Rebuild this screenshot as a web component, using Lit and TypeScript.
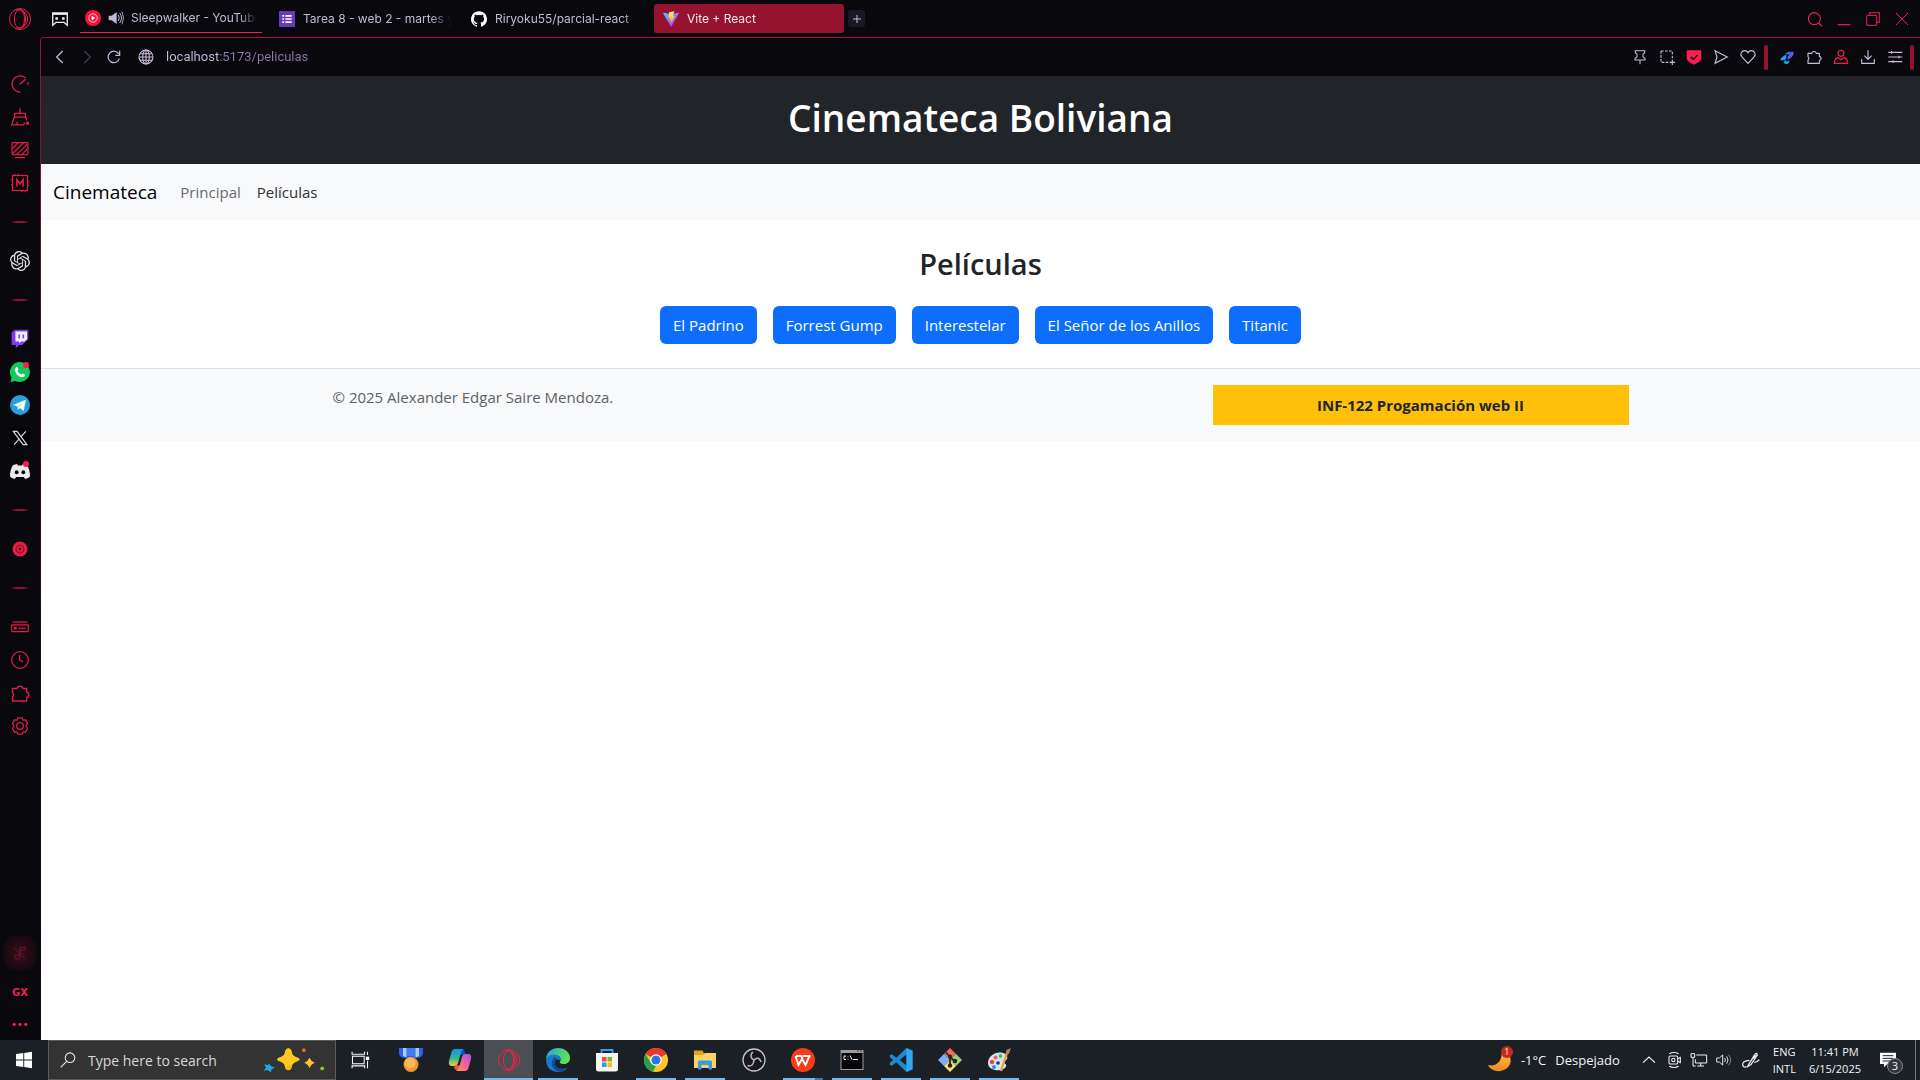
import { LitElement, html, svg, css, type SVGTemplateResult } from "lit";
import { customElement, property } from "lit/decorators.js";
import { classMap } from "lit/directives/class-map.js";

const icons: Record<string, SVGTemplateResult> = {
  operaGx: svg`<g fill="none" stroke="#f0204b" stroke-width="1"><circle cx="12" cy="12" r="10.5"/><ellipse cx="12" cy="12" rx="5.600" ry="9.400"/><path d="M8 3.200C14.500 1.500 19.500 6 19.500 12S14.500 22.500 8 20.800"/><path d="M13.500 3C17.500 8 17.500 16 13.500 21"/></g>`,
  gaming: svg`<path d="M3.300 6h17.400v13.500l-4-3.500H7.300l-4 3.500z" fill="none" stroke="#f1eef5" stroke-width="1.600"/><path d="M2.500 4h19v2.500h-19zM6.500 10h3v3h-3zM14.500 10h3v3h-3z" fill="#f1eef5"/>`,
  ytMusic: svg`<circle cx="12" cy="12" r="12" fill="#ff1039"/><circle cx="12" cy="12" r="6.300" fill="none" stroke="#fff" stroke-width="1.200"/><path d="M10 8.500v7l5.600-3.500z" fill="#fff"/>`,
  sound: svg`<path d="M1 8.500h4.500L13 3v18l-7.500-5.500H1z" fill="#c3b6d6"/><path d="M15.500 7.500q3 4.500 0 9M17.500 4.500q5.500 7.500 0 15" fill="none" stroke="#c3b6d6" stroke-width="1.500"/><path d="M21 2.500q4.500 9.500 0 19" fill="none" stroke="#c3b6d6" stroke-width="1.300"/>`,
  forms: svg`<rect width="24" height="24" rx="1" fill="#673ab7"/><path d="M5 6h2.600v2.600H5zM5 10.700h2.600v2.600H5zM5 15.400h2.600V18H5zM9.500 6H19v2.600H9.500zM9.500 10.700H19v2.600H9.500zM9.500 15.400H19V18H9.500z" fill="#fff"/>`,
  github: svg`<path fill="#fff" d="M12 .3a12 12 0 0 0-3.800 23.400c.6.100.800-.3.800-.6v-2c-3.300.700-4-1.600-4-1.600-.6-1.400-1.400-1.800-1.400-1.800-1-.7.100-.7.100-.7 1.200 0 1.900 1.200 1.900 1.200 1 1.800 2.800 1.300 3.500 1 0-.8.400-1.300.7-1.600-2.700-.3-5.500-1.300-5.500-6 0-1.200.5-2.300 1.300-3.100-.2-.4-.6-1.600 0-3.200 0 0 1-.3 3.400 1.200a11.500 11.500 0 0 1 6 0c2.300-1.500 3.300-1.200 3.300-1.200.6 1.600.2 2.800 0 3.200.9.800 1.300 1.900 1.300 3.200 0 4.600-2.800 5.600-5.500 5.900.5.400.9 1 .9 2.200v3.300c0 .3.100.7.800.6A12 12 0 0 0 12 .3"/>`,
  vite: svg`<defs><linearGradient id="va" x1="0" y1="0" x2=".6" y2="1"><stop stop-color="#41d1ff"/><stop offset="1" stop-color="#bd34fe"/></linearGradient><linearGradient id="vb" x1="0" y1="0" x2="0" y2="1"><stop stop-color="#ffea83"/><stop offset="1" stop-color="#ffa800"/></linearGradient></defs><path d="M23.700 3.700 12.600 23.300a.6.600 0 0 1-1 0L.3 3.700a.6.600 0 0 1 .6-.9L12 4.800l11.100-2a.6.600 0 0 1 .6.900z" fill="url(#va)"/><path d="m17 .2-8 1.600-.6 9.300 2.700-.6-.8 4 2.400-.8-1.200 5 .5.100 5.600-11.300-2.800.5z" fill="url(#vb)"/>`,
  plus: svg`<path d="M12 4v16M4 12h16" stroke="#c8bcda" stroke-width="2"/>`,
  search: svg`<g fill="none" stroke="#f0204b" stroke-width="1.700"><circle cx="11" cy="11.500" r="9"/><path d="m17.500 18 5 5"/></g>`,
  minimize: svg`<path d="M2.500 20.500h19" stroke="#f0204b" stroke-width="1.800"/>`,
  restore: svg`<g fill="none" stroke="#c51e43" stroke-width="1.800"><rect x="2.500" y="6.500" width="15" height="15" rx="1.500"/><path d="M7 6V2.500h14.500V17H18"/></g>`,
  close: svg`<path d="m3 3 18 18M21 3 3 21" stroke="#f0204b" stroke-width="1.500"/>`,
  back: svg`<path d="m16 3-9 9 9 9" fill="none" stroke="#c8bcda" stroke-width="1.900"/>`,
  forward: svg`<path d="m8 3 9 9-9 9" fill="none" stroke="#413b4c" stroke-width="1.900"/>`,
  reload: svg`<path d="M20 14.500A8.600 8.600 0 1 1 19 7.200M20.500 2.500v7H14" fill="none" stroke="#c8bcda" stroke-width="1.800"/>`,
  globe: svg`<g fill="none" stroke="#c8bcda" stroke-width="1.600"><circle cx="12" cy="12" r="10.500"/><ellipse cx="12" cy="12" rx="5" ry="10.500"/><path d="M12 1.500v21M1.500 12h21M3 7h18M3 17h18"/></g>`,
  pin: svg`<path d="M5 2.500h14v3l-2.500 2v4l3 3v2h-15v-2l3-3v-4L5 5.500zM12 17v6" fill="none" stroke="#c8bcda" stroke-width="1.600"/>`,
  snapshot: svg`<path d="M3 3h17v11" fill="none" stroke="#c8bcda" stroke-width="1.700" stroke-dasharray="4 2"/><path d="M3 3v17h11" fill="none" stroke="#c8bcda" stroke-width="1.700" stroke-dasharray="4 2"/><path d="M20 16v8M16 20h8" stroke="#c8bcda" stroke-width="1.700"/>`,
  shield: svg`<path d="M1 3.500Q1 2 2.500 2h19Q23 2 23 3.500V14q0 5-11 9.500Q1 19 1 14z" fill="#fa1e4e"/><path d="m7 12 4 3.500L17.500 9" fill="none" stroke="#12040a" stroke-width="1.900"/>`,
  send: svg`<path d="m3 2.500 18.500 9.500L3 21.500 6 12z" fill="none" stroke="#c8bcda" stroke-width="1.700"/>`,
  heart: svg`<path d="M12 21.500 2.500 11.500C-.5 7 3 2.500 7 2.500q3.500 0 5 3 1.500-3 5-3c4 0 7.500 4.500 4.500 9z" fill="none" stroke="#c8bcda" stroke-width="1.700"/>`,
  bird: svg`<path d="M9 7.500 14 4h8q0 7-5 9.500L13.500 16l-1-4 3-3.500z" fill="#4f5df0"/><path d="M11 8 3 13.500l-1 3.500h6l3-3zM9 16.500l3 2.500 4-2.500q0 3-3 6-4 .5-6-2z" fill="#18a5f5"/>`,
  puzzle: svg`<path d="M3 6.500h5.500a3.600 3.600 0 0 1 7 0H20v4.500a3.200 3.200 0 0 1 0 6.300v4.200H3v-5a3 3 0 0 0 0-5z" fill="none" stroke="currentColor" stroke-width="1.700" stroke-linejoin="round"/>`,
  person: svg`<g fill="none" stroke="#ec1f4a" stroke-width="1.800"><circle cx="12" cy="6.500" r="4.500"/><path d="M8 13c-4 .5-6 3-6 8.500h20c0-5.500-2-8-6-8.500l-4 3z"/></g>`,
  download: svg`<path d="M12 2v13M6.500 10l5.500 5.500 5.500-5.500M2.500 15v6.500h19V15" fill="none" stroke="#c8bcda" stroke-width="1.700"/>`,
  sliders: svg`<path d="M2 5h21M2 12h21M2 19h21M7 3v4M18 10v4M9 17v4" stroke="#c8bcda" stroke-width="1.700"/>`,

  gauge: svg`<path d="M12.500 21.700A9.700 9.700 0 1 1 19 5M11.500 12.500 19 6M21.700 9.500v4" fill="none" stroke="currentColor" stroke-width="1.500"/>`,
  broom: svg`<path d="M12 1.500v6M5.500 12V7.500h13V12zM5 12 2 21.500h14.500l1-3M8 21.500l1-4M19 12l1 4" fill="none" stroke="currentColor" stroke-width="1.500"/><circle cx="21" cy="19.500" r="2" fill="currentColor"/>`,
  monitor: svg`<rect x="2.500" y="3" width="19" height="14.500" rx="1" fill="none" stroke="currentColor" stroke-width="1.500"/><path d="m3 10 7-7M3 16.500 16.500 3M8 17.500 21 5M14 17.500l7-7M6 21h12" stroke="currentColor" stroke-width="1.500"/>`,
  mod: svg`<rect x="3" y="3" width="18" height="18" fill="none" stroke="currentColor" stroke-width="1.500"/><path d="M6 3V1M10 3V1M18 21v2M14 21v2M1 8h2M21 10h2M21 15h2M1 14h2" stroke="currentColor" stroke-width="1.300"/><path d="M8.300 16.500V8l3.700 5 3.700-5v8.500" fill="none" stroke="currentColor" stroke-width="1.900"/>`,
  openai: svg`<path fill="#e3e1e6" d="M22.2819 9.8211a5.9847 5.9847 0 0 0-.5157-4.9108 6.0462 6.0462 0 0 0-6.5098-2.9A6.0651 6.0651 0 0 0 4.9807 4.1818a5.9847 5.9847 0 0 0-3.9977 2.9 6.0462 6.0462 0 0 0 .7427 7.0966 5.98 5.98 0 0 0 .511 4.9107 6.051 6.051 0 0 0 6.5146 2.9001A5.9847 5.9847 0 0 0 13.2599 24a6.0557 6.0557 0 0 0 5.7718-4.2058 5.9894 5.9894 0 0 0 3.9977-2.9001 6.0557 6.0557 0 0 0-.7475-7.0729zm-9.022 12.6081a4.4755 4.4755 0 0 1-2.8764-1.0408l.1419-.0804 4.7783-2.7582a.7948.7948 0 0 0 .3927-.6813v-6.7369l2.02 1.1686a.071.071 0 0 1 .038.052v5.5826a4.504 4.504 0 0 1-4.4945 4.4944zm-9.6607-4.1254a4.4708 4.4708 0 0 1-.5346-3.0137l.142.0852 4.783 2.7582a.7712.7712 0 0 0 .7806 0l5.8428-3.3685v2.3324a.0804.0804 0 0 1-.0332.0615L9.74 19.9502a4.4992 4.4992 0 0 1-6.1408-1.6464zM2.3408 7.8956a4.485 4.485 0 0 1 2.3655-1.9728V11.6a.7664.7664 0 0 0 .3879.6765l5.8144 3.3543-2.0201 1.1685a.0757.0757 0 0 1-.071 0l-4.8303-2.7865A4.504 4.504 0 0 1 2.3408 7.872zm16.5963 3.8558L13.1038 8.364 15.1192 7.2a.0757.0757 0 0 1 .071 0l4.8303 2.7913a4.4944 4.4944 0 0 1-.6765 8.1042v-5.6772a.79.79 0 0 0-.407-.667zm2.0107-3.0231l-.142-.0852-4.7735-2.7818a.7759.7759 0 0 0-.7854 0L9.409 9.2297V6.8974a.0662.0662 0 0 1 .0284-.0615l4.8303-2.7866a4.4992 4.4992 0 0 1 6.6802 4.66zM8.3065 12.863l-2.02-1.1638a.0804.0804 0 0 1-.038-.0567V6.0742a4.4992 4.4992 0 0 1 7.3757-3.4537l-.142.0805L8.704 5.459a.7948.7948 0 0 0-.3927.6813zm1.0976-2.3654l2.602-1.4998 2.6069 1.4998v2.9994l-2.5974 1.4997-2.6067-1.4997Z"/>`,
  twitch: svg`<path d="M5.500 1 2 4.500v14.700h5V23l4-3.800h3.500l7.500-7V1z" fill="#7c3df0"/><path d="M6.500 3h14v9l-3 3h-4l-2.500 2.500V15H6.500z" fill="#f3eeff"/><path d="M11 6.500v5M16 6.500v5" stroke="#7c3df0" stroke-width="1.800"/>`,
  whatsapp: svg`<path d="M12 0a12 12 0 0 1 0 24 12 12 0 0 1-5.500-1.300L.5 24l1.400-5.500A12 12 0 0 1 12 0z" fill="#12c95c"/><path d="M7 6.500c1-1 2-.5 2.300.4l.8 2c0 .8-1 1.200-1 1.800 1 2 2.300 3.200 4.300 4.200.7 0 1-1.200 1.800-1.200l2.200 1c1 .6.600 1.800-.3 2.600C12 21 3 11.500 7 6.500z" fill="#fff"/>`,
  telegram: svg`<circle cx="12" cy="12" r="12" fill="#279fdb"/><path d="m3.500 12 15.600-6.200-2.700 13.300-4.600-3.400-2.400 2.300-.3-4.200z" fill="#f4fafd"/><path d="m9.200 13.800 7.600-6-6 6.700-1.300 3.400z" fill="#bddced"/>`,
  x: svg`<rect width="24" height="24" rx="2" fill="#000"/><path d="M4 4h4.500l11.700 16h-4.500zM19 4l-6.200 7M5 20l6.400-7.200" fill="none" stroke="#d9d5df" stroke-width="1.500"/>`,
  discord: svg`<path d="M8.500 3.500C5 4 3.500 5.200 3.500 5.200 1 9 0 13.500 0 18.500c2.500 2.500 6 2.800 6 2.800l1.400-2h9.200l1.400 2s3.500-.3 6-2.800c0-5-1-9.500-3.500-13.300 0 0-1.500-1.200-5-1.700l-1 2h-5z" fill="#ebe9ee"/><ellipse cx="8" cy="13.500" rx="2.300" ry="2.500" fill="#09080d"/><ellipse cx="16" cy="13.500" rx="2.300" ry="2.500" fill="#09080d"/>`,
  player: svg`<circle cx="12" cy="12" r="9" fill="#e81c47"/><circle cx="12" cy="12" r="4.800" fill="none" stroke="#6c1027" stroke-width="1"/><path d="m10.500 9.500 4 2.500-4 2.500z" fill="#4a0b1b"/>`,
  panel: svg`<path d="M3 6h18" stroke="currentColor" stroke-width="1.500"/><rect x="2" y="9.500" width="20" height="8" rx="1" fill="none" stroke="currentColor" stroke-width="1.500"/><path d="M4.500 12H8v3H4.500z" fill="currentColor"/><path d="M10 13.500h9" stroke="currentColor" stroke-width="1.500"/>`,
  clock: svg`<circle cx="12" cy="12" r="10" fill="none" stroke="currentColor" stroke-width="1.500"/><path d="M11.500 6v6.500l4 1.500" fill="none" stroke="currentColor" stroke-width="1.500"/>`,
  gear: svg`<path d="M9.500 2.200h5l1.200 2.700 2.900-.3 2.500 4.300L19.400 12l1.700 3.100-2.500 4.300-2.900-.3-1.200 2.700h-5l-1.200-2.700-2.900.3-2.500-4.300L4.600 12 2.900 8.900l2.500-4.300 2.900.3z" fill="none" stroke="currentColor" stroke-width="1.500" stroke-linejoin="round"/><circle cx="12" cy="12" r="4" fill="none" stroke="currentColor" stroke-width="1.500"/>`,
  muted: svg`<path d="M12 19V3.500h8v4h-8M12 15H4.500v6H12M4 5l16 16" fill="none" stroke="#701329" stroke-width="1.500"/>`,
  dots: svg`<g fill="#f0204b"><circle cx="5" cy="12.500" r="1.900"/><circle cx="12" cy="12.500" r="1.900"/><circle cx="19" cy="12.500" r="1.900"/></g>`,

  windows: svg`<path d="M4 6.100 11.300 5v6.500H4zM12.200 4.900 20 3.700v7.800h-7.800zM4 12.400h7.300V19L4 17.900zM12.200 12.400H20v7.900l-7.800-1.200z" fill="#fff"/>`,
  find: svg`<g fill="none" stroke="#e8e8e8" stroke-width="1.600"><circle cx="15" cy="8.500" r="7.200"/><path d="M10 14 1 23"/></g>`,
  sparkles: svg`<g transform="translate(1 0)"><path d="M31 1q3.500 0 4.200 6 1 2.500 6.300 4 3 1.500 0 3.500-5.300 1.500-6.300 4-.7 6-4.200 6t-4.200-6q-1-2.500-6.300-4-3-2 0-3.500 5.300-1.500 6.300-4Q27.500 1 31 1z" fill="#fdc81f"/><path d="M42 13q-5.500 2-6.800 5.500-.7 6-4.200 6-2.500-1-3-4 9-2 14-7.500z" fill="#f5ad1b" opacity=".6"/><path d="M53.500 11q1.500 3.500 5.500 5.500-4 1.500-5.500 5.500-1.500-4-5.500-5.500 4-2 5.500-5.500z" fill="#fbc12c"/><path d="m10 17 3 3.500 3.500 1-3.500 2-.5 3-3.500-2-4 .5 2-3.500-1.500-3.500 4 1z" fill="#1fa7e8"/><circle cx="47.500" cy="3" r="2" fill="#f06424"/><circle cx="67" cy="22.500" r="2" fill="#8cc63e"/></g>`,
  taskView: svg`<g fill="none" stroke="#f4f4f4" stroke-width="1.300"><rect x="3" y="7.500" width="14" height="9"/><path d="M2.500 2v3h15V2M2.500 22v-3h15v3M21 2v4M21 13v9"/></g><path d="M19 8h4v4h-4z" fill="#fff"/>`,
  medal: svg`<path d="M0 0h24v5q0 5-7 5H7Q0 10 0 5z" fill="#2f62e8"/><path d="M4 0h3.500v9.500L4 8zM16.500 0H20v8l-3.500 1.500z" fill="#a9d0fb"/><path d="M8 0h8v8H8z" fill="#3f7cf3"/><circle cx="12" cy="16.500" r="7.500" fill="#f0943c"/><circle cx="11" cy="15" r="5.500" fill="#fdb74b"/>`,
  copilot: svg`<defs><linearGradient id="ca" x1="0" y1="0" x2="0" y2="1"><stop stop-color="#1b8ff0"/><stop offset=".55" stop-color="#30b98c"/><stop offset="1" stop-color="#f5cf2d"/></linearGradient><linearGradient id="cb" x1="1" y1="0" x2="0" y2="1"><stop stop-color="#a553ee"/><stop offset=".5" stop-color="#f2619b"/><stop offset="1" stop-color="#fb9a48"/></linearGradient></defs><path d="M10 2h6l2 5h-6z" fill="#0c4ed3"/><path d="M7 1h9q-2.500 1-3.500 5L10 15q-1 3-4 3H4q-4 0-3-5L3.500 4Q4.500 1 7 1z" fill="url(#ca)"/><path d="m8 17 5 .5L11 23q-4 0-5-4z" fill="#f05a3a"/><path d="M17 23H8q2.500-1 3.500-5L14 9q1-3 4-3h2q4 0 3 5l-2.500 9q-1 3-3.500 3z" fill="url(#cb)"/>`,
  edge: svg`<defs><linearGradient id="ea" x1="0" y1="0" x2="1" y2=".3"><stop stop-color="#25a5df"/><stop offset="1" stop-color="#62e04f"/></linearGradient></defs><path d="M0 12C0 4 6 0 12 0c7 0 12 4.500 12 10 0 4-3 6-6.500 6-3 0-4.500-1.200-3.500-2.500 1.500-2 .5-6-4-6S1 9.500 0 12z" fill="url(#ea)"/><path d="M0 12q1-5 8-5.500c5 0 7 3.500 6.200 6.500-2-3-6.200-1-6.200 3 0 5 6 8 13 4-2 3-5.500 4-9 4C5 24 0 19 0 12z" fill="#1b78ca"/><path d="M9 9c-6 4-3 14 5 14.800 3-.3 6-2 7.500-4.300-6 2.500-13 .5-12.500-5 .2-2 1.500-3 2.500-3z" fill="#0c4f96"/>`,
  store: svg`<path d="M6.500 6V2h11v4" fill="none" stroke="#2aa5ea" stroke-width="1.800"/><path d="M1 5h22v16q0 2.500-2.500 2.500h-17Q1 23.500 1 21z" fill="#f4f4f4"/><path d="M7 9h4.500v4.500H7z" fill="#f0502a"/><path d="M12.500 9H17v4.500h-4.500z" fill="#7fba1a"/><path d="M7 14.500h4.500V19H7z" fill="#20a2ea"/><path d="M12.500 14.500H17V19h-4.500z" fill="#fdb913"/>`,
  chrome: svg`<circle cx="12" cy="12" r="12" fill="#fdc724"/><path d="M12 12 1.600 6A12 12 0 0 1 22.400 6z" fill="#e8372b"/><path d="M12 0a12 12 0 0 1 10.400 6H12z" fill="#e8372b"/><path d="M1.600 6 7 15l5 3-3 5.600A12 12 0 0 1 1.600 6z" fill="#22a24c"/><circle cx="12" cy="12" r="5.800" fill="#fff"/><circle cx="12" cy="12" r="4.500" fill="#2a74ea"/>`,
  explorer: svg`<path d="M1 2.500h8.500l1.500 3H23V20H1z" fill="#dfa31c"/><path d="M1 7h9l2-2h11v15H1z" fill="#fbd465"/><path d="M5 21.500V14q0-1.500 1.500-1.500h11q1.500 0 1.500 1.500v7.500h-3.500V17h-7v4.500z" fill="#3f9be0"/>`,
  obs: svg`<circle cx="12" cy="12" r="11" fill="#18171b" stroke="#c7c7ca" stroke-width="1.300"/><g fill="none" stroke="#b5b5ba" stroke-width="1.600"><path d="M11 4c-3 2-3 6 1 8"/><path d="M19 14c-1-4-4-5-7-2"/><path d="M5.500 17.500c4 1.500 6-1 6.500-5.500"/></g>`,
  wps: svg`<circle cx="12" cy="12" r="12" fill="#fb3b17"/><path d="m4.500 8 3 9 3.500-6 3.500 6 4-9M5 8h5.500l1 3M12 8h7.500" fill="none" stroke="#fff" stroke-width="1.900"/>`,
  terminal: svg`<path d="M.5 2h23v20H.5z" fill="#9b9da2"/><path d="M1.500 5h21v16h-21z" fill="#050505"/><path d="M17 3h1.500M20 3h1.500" stroke="#333" stroke-width="1"/><path d="M6 8H4v3.500h2M8 8.500v.8M8 10.700v.8M10 7.500l2 4M13 11.500h5" stroke="#eee" stroke-width="1" fill="none"/>`,
  vscode: svg`<path d="m17.500 0 6 2.800v18.400l-6 2.800L7.300 14.200l-4.600 3.600L.8 16.700V15l3.200-3-3.200-3V7.300l1.900-1.100 4.600 3.600zM17.500 6.500 10.500 12l7 5.500z" fill="#1f8ad2"/><path d="m17.500 0 6 2.800v18.400l-6 2.800z" fill="#31a8f0"/>`,
  git: svg`<g><path d="m12 0 6 6-6 6-6-6z" fill="#f06a66"/><path d="m6 6 6 6-6 6-6-6z" fill="#7db0f5"/><path d="m18 6 6 6-6 6-6-6z" fill="#96d671"/><path d="m12 12 6 6-6 6-6-6z" fill="#fbe07b"/></g><path d="M8 4.500 12 9v8M12 9l4.500 4" stroke="#2a2320" stroke-width="1.700" fill="none"/><g fill="#2a2320"><circle cx="12" cy="8.500" r="2"/><circle cx="12" cy="17.500" r="2.200"/><circle cx="17" cy="13" r="2.200"/></g>`,
  paint: svg`<path d="M1 15C1 8 9 3 16 5c4 1 5 4 4 6-1 1.500-3 1.500-3 3s3 2 2 4.500C17 24 1 24 1 15z" fill="#cfe6f5"/><circle cx="5" cy="14" r="2.200" fill="#e44a3c"/><circle cx="8.500" cy="9.500" r="2" fill="#f0615a"/><circle cx="13.500" cy="8" r="1.900" fill="#62b64a"/><circle cx="7" cy="19" r="2" fill="#4a83dd"/><circle cx="11" cy="15" r="1.800" fill="#28394a"/><path d="m20 5-6 18" stroke="#eea02f" stroke-width="2.200"/><path d="m18.500 6 1-4 4.500-2-2 5.500-2 1.500z" fill="#b8824f"/>`,
  moon: svg`<defs><linearGradient id="ma" x1="0" y1="0" x2="0" y2="1"><stop stop-color="#fcc24c"/><stop offset="1" stop-color="#f2861c"/></linearGradient></defs><path d="M14 3c8 2 11 9 7 15-5 7-17 7-21-1 8 2 14-3 14-14z" fill="url(#ma)"/>`,
  chevron: svg`<path d="m3 16 9-8.500 9 8.500" fill="none" stroke="#f0f0f0" stroke-width="1.800"/>`,
  meet: svg`<g fill="none" stroke="#f0f0f0" stroke-width="1.600"><rect x="4.500" y="6" width="13" height="12" rx="2"/><circle cx="11" cy="12" r="2.500"/><path d="m17.500 10 4-2v8l-4-2M5 2.500q7-3.500 14 0M5 21.500q7 3.500 14 0"/></g>`,
  network: svg`<g fill="none" stroke="#f0f0f0" stroke-width="1.500"><path d="M8 4.500h15.500v12H6.500V11M14.500 16.500V21M9.500 21h10"/><path d="M0 2.500h5.500v5.500H0zM3 8v13h4"/></g>`,
  volume: svg`<path d="M1 9h4l5-4.500v15L5 15H1z" fill="none" stroke="#f0f0f0" stroke-width="1.400"/><path d="M13 9q2 3 0 6M16 6.500q4 5.500 0 11" fill="none" stroke="#f0f0f0" stroke-width="1.400"/><path d="M19 4q6 8 0 16" fill="none" stroke="#85888b" stroke-width="1.400"/>`,
  pen: svg`<path d="m8.500 18.500 8-13q3-3 3 .5l-7.500 11.500-4 2.500zM10 12.500q-8.500.5-8 5 .5 4 4.500 2.500M13 11l6-5M16 15q4-1 6-3.500" fill="none" stroke="#f0f0f0" stroke-width="1.500"/>`,
  notice: svg`<path d="M0 1h24v17H11l-5 5v-5H0z" fill="#fff"/><path d="M4 5.500h16M4 9.500h16M4 13.500h11" stroke="#1b2026" stroke-width="1.500"/>`,
};

const glyph = (name: string, cls = "i16", box = "0 0 24 24") =>
  html`<svg class=${cls} viewBox=${box} aria-hidden="true">${icons[name]}</svg>`;

const sizes = css`
  * { box-sizing: border-box; }
  svg { display: block; flex: none; overflow: visible; }
  button { appearance: none; border: 0; padding: 0; margin: 0; background: none; color: inherit; font: inherit; }
  .i12 { width: 12px; height: 12px; }
  .i16 { width: 16px; height: 16px; }
  .i20 { width: 20px; height: 20px; }
  .i24 { width: 24px; height: 24px; }
`;

interface Tab { icon: string; title: string; audible?: boolean; active?: boolean; }

@customElement("browser-tabs")
class BrowserTabs extends LitElement {
  @property({ attribute: false }) tabs: Tab[] = [];
  static styles = [sizes, css`
    :host { display: flex; height: 37px; font: 12px/16px Inter, sans-serif; color: #c3b8d3; }
    .logo { width: 40px; display: grid; place-items: center; }
    .workspace { width: 40px; display: grid; place-items: center; }
    .tabs { display: flex; gap: 2px; flex: 1; min-width: 0; padding-top: 4px; }
    .tab { display: flex; align-items: center; gap: 8px; width: 190px; height: 29px; padding: 0 9px; border-radius: 3px; text-align: left; }
    .tab.audible { width: 182px; margin-right: 6px; padding: 0 5px; gap: 7px; border-bottom: 1px solid #f0204b; border-radius: 0; }
    .tab.active { background: #96132f; color: #f0e6ee; }
    .title { flex: 1; overflow: hidden; white-space: nowrap; mask-image: linear-gradient(90deg, #000 86%, transparent); }
    .add { width: 17px; height: 17px; margin: 6px 0 0 2px; border-radius: 3px; background: #1b1825; display: grid; place-items: center; }
    .window { display: flex; align-items: center; gap: 13px; padding-right: 10px; }
  `];
  render() {
    return html`
      <button class="logo" aria-label="Opera GX">${glyph("operaGx", "i24")}</button>
      <button class="workspace" aria-label="Workspace">${glyph("gaming", "i20")}</button>
      <div class="tabs" role="tablist">
        ${this.tabs.map((t) => html`
          <button role="tab" aria-selected=${t.active ? "true" : "false"}
            class=${classMap({ tab: true, active: !!t.active, audible: !!t.audible })}>
            ${glyph(t.icon)}${t.audible ? glyph("sound") : null}<span class="title">${t.title}</span>
          </button>`)}
        <button class="add" aria-label="New tab">${glyph("plus", "i12")}</button>
      </div>
      <div class="window">
        ${["search", "minimize", "restore", "close"].map((n) => html`<button aria-label=${n}>${glyph(n)}</button>`)}
      </div>`;
  }
}

@customElement("address-bar")
class AddressBar extends LitElement {
  static styles = [sizes, css`
    :host { display: flex; align-items: center; height: 38px; padding: 0 6px 0 11px; color: #c8bcda; background: #09080d; }
    .nav { display: flex; gap: 11px; }
    .site { margin-left: 16px; }
    .url { flex: 1; min-width: 0; margin: 0 12px; border: 0; padding: 0; outline: 0; height: 24px; font: 13px/24px Roboto, sans-serif;
      color: transparent; background: linear-gradient(90deg, #c8bcda 54px, #8a78a6 54px) text; }
    .actions { display: flex; align-items: center; gap: 11px; }
    .bar { width: 4px; height: 25px; border-radius: 2px; background: #96132f; margin: 0 11px 0 8px; }
    .bar.end { margin: 0 0 0 7px; }
  `];
  render() {
    const group = (names: string[]) => html`<div class="actions">${names.map((n) => html`<button aria-label=${n}>${glyph(n)}</button>`)}</div>`;
    return html`
      <div class="nav">${["back", "forward", "reload"].map((n) => html`<button aria-label=${n}>${glyph(n)}</button>`)}</div>
      <div class="site">${glyph("globe")}</div>
      <input class="url" aria-label="Address" value="localhost:5173/peliculas" />
      ${group(["pin", "snapshot", "shield", "send", "heart"])}
      <span class="bar"></span>
      ${group(["bird", "puzzle", "person", "download", "sliders"])}
      <span class="bar end"></span>`;
  }
}

@customElement("side-bar")
class SideBar extends LitElement {
  static styles = [sizes, css`
    :host { box-sizing: border-box; display: flex; flex-direction: column; width: 40px; flex: none; padding: 30px 0 0; color: #e01d45; background: #09080d; }
    .slot { position: relative; height: 33px; display: grid; place-items: center; width: 100%; }
    .low { height: 32px; }
    .sep { height: 45px; display: grid; place-items: center; }
    .sep::before { content: ""; width: 18px; height: 2px; background: linear-gradient(90deg, transparent, #96132f 30%, #96132f 70%, transparent); }
    .ico { width: 20px; height: 20px; }
    .dot { position: absolute; top: 7px; right: 11px; width: 6px; height: 6px; border-radius: 50%; background: #fa1e4e; }
    .mute { height: 34px; width: 32px; margin: auto 4px 6px; display: grid; place-items: center; border-radius: 8px; background: radial-gradient(#3d0c1b, #1d0911 60%, #09080d); }
    .gx { padding-top: 2px; font: bold 10px/12px "DejaVu Sans", sans-serif; color: #f0204b; }
  `];
  groups = [["gauge", "broom", "monitor", "mod"], ["openai"], ["twitch", "whatsapp", "telegram", "x", "discord"], ["player"], ["panel", "clock", "puzzle", "gear"]];
  render() {
    return html`
      ${this.groups.map((g, i) => html`
        ${i ? html`<div class="sep"></div>` : null}
        ${g.map((n) => html`<button class="slot" aria-label=${n}>${glyph(n, "ico")}${n === "whatsapp" || n === "discord" ? html`<span class="dot"></span>` : null}</button>`)}`)}
      <button class="mute" aria-label="Muted player">${glyph("muted")}</button>
      <button class="slot low gx">GX</button>
      <button class="slot low" aria-label="More">${glyph("dots", "i20")}</button>`;
  }
}

@customElement("cinema-page")
class CinemaPage extends LitElement {
  @property({ attribute: false }) movies: string[] = [];
  static styles = [sizes, css`
    :host { display: block; flex: 1; background: #fff; color: #212529; font: 15px/24px "Open Sans", "Noto Sans", sans-serif; }
    header { padding: 16px 16px 20px; background: #212529; color: #fff; text-align: center; }
    h1 { margin: 0; font-size: 37px; line-height: 52px; font-weight: 600; }
    nav { display: flex; align-items: center; height: 56px; padding: 0 12px; background: #f8f9fa; }
    a { color: #6a6b6d; text-decoration: none; }
    .brand { font-size: 19px; line-height: 30px; color: #000; margin-right: 23px; }
    .links { display: flex; gap: 16px; }
    .current { color: #303132; }
    main { padding: 24px 12px; text-align: center; }
    h2 { margin: 0 0 22px; font-size: 29px; line-height: 40px; font-weight: 600; }
    .movies { display: flex; flex-wrap: wrap; justify-content: center; gap: 16px; }
    .movie { height: 38px; padding: 0 13px; border-radius: 6px; background: #0d6efd; color: #fff; }
    footer { border-top: 1px solid #dee2e6; background: #f8f9fa; padding: 16px 0; }
    .row { display: grid; grid-template-columns: 2fr 1fr; max-width: 1320px; margin: 0 auto; }
    .copy, .course { min-width: 0; padding: 0 12px; }
    .copy { color: #5e6266; }
    .badge { padding: 8px; background: #ffc107; text-align: center; font-weight: 700; }
  `];
  render() {
    return html`
      <header><h1>Cinemateca Boliviana</h1></header>
      <nav><a class="brand" href="/">Cinemateca</a>
        <div class="links"><a href="/">Principal</a><a class="current" href="/peliculas">Películas</a></div></nav>
      <main><h2>Películas</h2>
        <div class="movies">${this.movies.map((m) => html`<button class="movie">${m}</button>`)}</div></main>
      <footer><div class="row">
        <div class="copy">© 2025 Alexander Edgar Saire Mendoza.</div>
        <div class="course"><div class="badge">INF-122 Progamación web II</div></div>
      </div></footer>`;
  }
}

interface App { icon: string; state: "idle" | "open" | "stacked" | "active"; }

@customElement("task-bar")
class TaskBar extends LitElement {
  @property({ attribute: false }) apps: App[] = [];
  static styles = [sizes, css`
    :host { display: flex; height: 40px; background: #1b2026; color: #f4f4f4; font: 14px/20px "Open Sans", "Noto Sans", sans-serif; }
    button { display: grid; place-items: center; }
    .start { width: 48px; }
    .search { display: flex; align-items: center; gap: 12px; width: 288px; padding: 0 10px 0 11px; background: #333; border: 1px solid #5c5c5c; }
    .search input { flex: 1; min-width: 0; border: 0; padding: 2px 0 0; outline: 0; background: none; font: inherit; color: #d8d8d8; }
    .search input::placeholder { color: #d8d8d8; }
    .spark { width: 62px; height: 26px; }
    .view { width: 48px; margin-right: 2px; }
    .apps { display: flex; flex: 1; }
    .app { width: 49px; }
    .open { background: linear-gradient(#76b9ed, #76b9ed) 50% 100% / 40px 2px no-repeat; }
    .stacked { background: linear-gradient(90deg, #76b9ed 32px, #4c7698 32px) 50% 100% / 40px 2px no-repeat; }
    .active { background: #4b4e53; box-shadow: inset 0 -2px #76b9ed; }
    .weather { display: flex; align-items: center; gap: 9px; margin-right: 21px; font-size: 13px; }
    .moon { position: relative; }
    .count { position: absolute; top: -2px; right: -1px; width: 12px; height: 12px; border-radius: 50%; background: #c42b1c; font-size: 9px; line-height: 12px; text-align: center; }
    .tray { display: flex; align-items: center; gap: 9px; margin-right: 12px; }
    .stack { font-size: 11px; line-height: 17px; text-align: center; align-content: center; }
    .lang { margin-right: 13px; }
    .notice { position: relative; width: 54px; }
    .badge { position: absolute; left: 26px; top: 18px; width: 16px; height: 16px; border: 1px solid #85888b; border-radius: 50%; background: #33373c; font-size: 11px; line-height: 14px; }
    .edge { width: 5px; border-left: 1px solid #75787b; }
  `];
  render() {
    return html`
      <button class="start" aria-label="Start">${glyph("windows", "i24")}</button>
      <label class="search">${glyph("find")}<input aria-label="Search" placeholder="Type here to search" />${glyph("sparkles", "spark", "5 0 66 27")}</label>
      <button class="view" aria-label="Task view">${glyph("taskView", "i20")}</button>
      <div class="apps">${this.apps.map((a) => html`<button class="app ${a.state}" aria-label=${a.icon}>${glyph(a.icon, "i24")}</button>`)}</div>
      <div class="weather"><span class="moon">${glyph("moon", "i24")}<span class="count">1</span></span><span>-1°C</span><span>Despejado</span></div>
      <div class="tray">${["chevron", "meet", "network", "volume"].map((n) => glyph(n))}${glyph("pen", "i20")}</div>
      <div class="stack lang">ENG<br />INTL</div>
      <div class="stack">11:41 PM<br />6/15/2025</div>
      <button class="notice" aria-label="Notifications">${glyph("notice")}<span class="badge">3</span></button>
      <span class="edge"></span>`;
  }
}

@customElement("app-root")
class AppRoot extends LitElement {
  static styles = css`
    :host { display: flex; flex-direction: column; min-height: 100vh; background: #09080d; }
    .body { display: flex; flex: 1; }
    .view { display: flex; flex-direction: column; flex: 1; min-width: 0; border-top: 1px solid #a01634; border-top-left-radius: 4px; padding-left: 1px; background: linear-gradient(#a01634, #4a0c1e 30%, #12080e 70%); overflow: hidden; }
  `;
  tabs: Tab[] = [
    { icon: "ytMusic", title: "Sleepwalker - YouTube", audible: true },
    { icon: "forms", title: "Tarea 8 - web 2 - martes y" },
    { icon: "github", title: "Riryoku55/parcial-react" },
    { icon: "vite", title: "Vite + React", active: true },
  ];
  movies = ["El Padrino", "Forrest Gump", "Interestelar", "El Señor de los Anillos", "Titanic"];
  apps: App[] = [
    { icon: "medal", state: "idle" }, { icon: "copilot", state: "idle" }, { icon: "operaGx", state: "active" },
    { icon: "edge", state: "open" }, { icon: "store", state: "idle" }, { icon: "chrome", state: "open" },
    { icon: "explorer", state: "open" }, { icon: "obs", state: "idle" }, { icon: "wps", state: "stacked" },
    { icon: "terminal", state: "open" }, { icon: "vscode", state: "open" }, { icon: "git", state: "open" },
    { icon: "paint", state: "open" },
  ];
  render() {
    return html`
      <browser-tabs .tabs=${this.tabs}></browser-tabs>
      <div class="body">
        <side-bar></side-bar>
        <div class="view"><address-bar></address-bar><cinema-page .movies=${this.movies}></cinema-page></div>
      </div>
      <task-bar .apps=${this.apps}></task-bar>`;
  }
}
